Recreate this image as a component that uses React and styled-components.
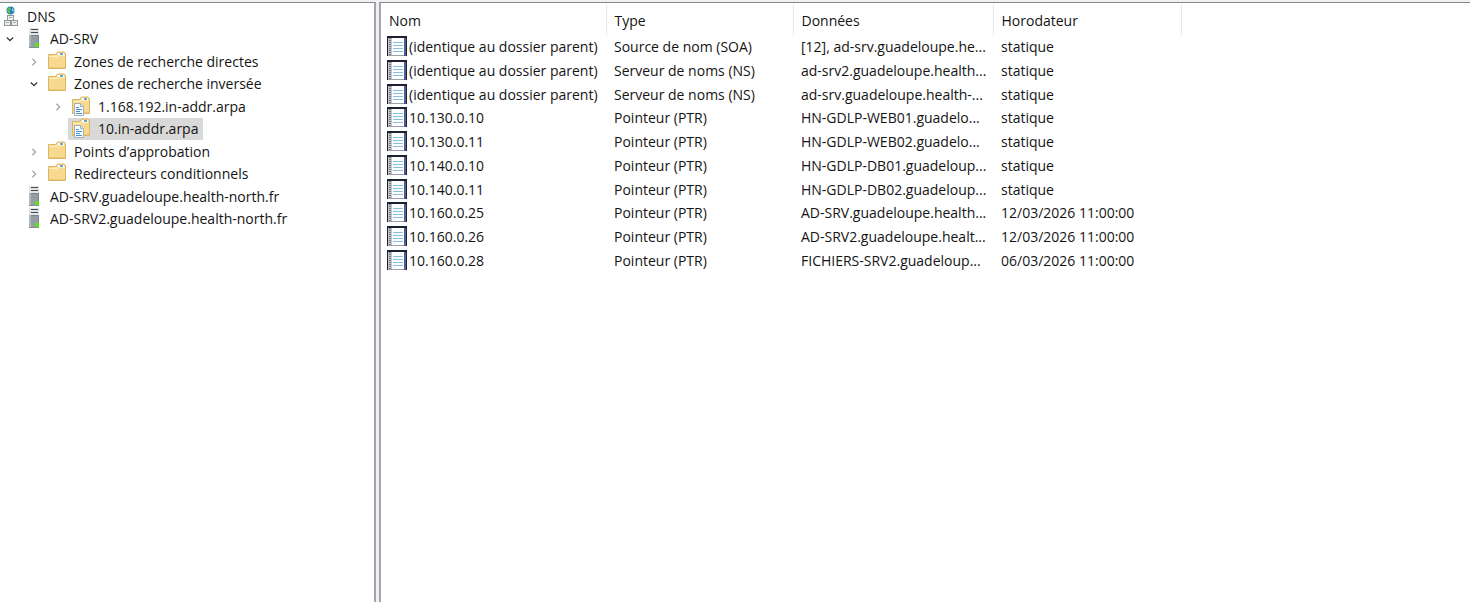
import React from "react";
import styled, { createGlobalStyle } from "styled-components";

const GlobalStyle = createGlobalStyle`
  * { box-sizing: border-box; }
  body {
    margin: 0;
    background: #f0f0f0;
    color: #141414;
    font-family: "Open Sans", "Noto Sans", sans-serif;
    font-size: 14px;
    line-height: 20px;
  }
`;

const Console = styled.main`
  display: flex;
  gap: 3px;
  min-height: 100vh;
  padding-top: 2px;
`;

const TreePane = styled.nav`
  flex: 0 0 376px;
  min-width: 0;
  background: #fff;
  border-top: 1px solid #828790;
  border-right: 2px solid #a2a4ae;
  padding-top: 2px;
`;

const ListPane = styled.section`
  flex: 1;
  min-width: 0;
  background: #fff;
  border-top: 1px solid #828790;
  border-left: 2px solid #a2a4ae;
  padding-top: 1px;
`;

const Tree = styled.ul`
  list-style: none;
  margin: 0;
  padding: 0;
`;

const TreeItem = styled.li`
  display: flex;
  align-items: center;
  height: 23px;
  padding-left: ${(p) => p.$level * 24}px;
  white-space: nowrap;

  &:nth-child(even) { height: 22px; }
`;

const Toggle = styled.button`
  display: flex;
  align-items: center;
  justify-content: center;
  width: 20px;
  height: 20px;
  padding: 0;
  border: 0;
  background: none;
`;

const ToggleSpace = styled.span`
  width: 20px;
`;

const Node = styled.span`
  display: flex;
  align-items: center;
  height: 100%;
  gap: ${(p) => (p.$root ? 3 : 6)}px;
  padding-right: 5px;
  background: ${(p) => (p.$selected ? "#d9d9d9" : "transparent")};
`;

const TreeIcon = styled.svg`
  flex: none;
  width: 24px;
  height: 22px;
`;

const Table = styled.table`
  width: 100%;
  table-layout: fixed;
  border-collapse: collapse;
`;

const Column = styled.col`
  width: ${(p) => (p.$width ? p.$width + "px" : "auto")};
`;

const Heading = styled.th`
  height: 31px;
  padding: 2px 8px 0;
  font-weight: 400;
  text-align: left;
  border-right: 1px solid #e8e8e8;

  &:last-child { border-right: 0; }
`;

const Record = styled.tr`
  height: 24px;

  &:nth-child(4n + 3) { height: 23px; }
`;

const Cell = styled.td`
  padding: 0 0 0 8px;
  white-space: nowrap;
`;

const NameCell = styled(Cell)`
  padding-left: 6px;
`;

const Name = styled.span`
  display: flex;
  align-items: center;
  gap: 2px;
`;

const RecordSvg = styled.svg`
  flex: none;
  width: 20px;
  height: 22px;
`;

const Chevron = ({ open }) => (
  <svg width="12" height="12" viewBox="0 0 12 12" fill="none" aria-hidden="true">
    {open ? (
      <path d="M2.8 4.6 6 7.6 9.2 4.6" stroke="#404040" strokeWidth="1.4" />
    ) : (
      <path d="M4.4 2.8 7.6 6 4.4 9.2" stroke="#a6a6a6" strokeWidth="1.3" />
    )}
  </svg>
);

const NetworkIcon = () => (
  <TreeIcon viewBox="0 0 24 22" aria-hidden="true">
    <circle cx="10.500" cy="4.500" r="4" fill="#2b7fb8" />
    <path d="M7.500 2.700 10.100 1.100 11.100 2.900 9.500 4.700 10.500 6.500 9.100 7.700 7.100 5.500Z" fill="#5fbd5b" />
    <path d="M12 2 14 4 13 6 12 4.200Z" fill="#8bd6e6" />
    <g fill="#eceeee" stroke="#92989c">
      <rect x="7.500" y="9.500" width="6" height="5" />
      <rect x="4.500" y="14.500" width="6" height="5" />
      <rect x="11.500" y="14.500" width="6" height="5" />
    </g>
    <path d="M9 11.500h3M6 16.500h3M13 16.500h3" stroke="#aab0b4" />
  </TreeIcon>
);

const ServerIcon = () => (
  <TreeIcon viewBox="0 0 24 22" aria-hidden="true">
    <rect x="9" y="0" width="10" height="20" fill="#939da5" />
    <rect x="9" y="0" width="2" height="20" fill="#b0b8be" />
    <rect x="18" y="0" width="1" height="20" fill="#79838b" />
    <rect x="9" y="0" width="10" height="7" fill="#dfe3e6" />
    <path d="M11 1.500h7M11 4.500h7" stroke="#454c51" />
    <path d="M11 7.500h7" stroke="#7b858c" />
    <rect x="15" y="15" width="4" height="4" fill="#5fe01c" />
    <path d="M9 19.500h10" stroke="#858e95" />
  </TreeIcon>
);

const FolderShape = () => (
  <>
    <path d="M4.500 17.500V3.500h7l2-2.500h6.500l1.500 1.500v15Z" fill="#f7d98f" stroke="#dcb465" />
    <path d="M5 5.500h8l1.500-1h6" stroke="#fdf0c4" fill="none" />
    <rect x="14" y="2" width="6" height="2" fill="#fff" />
    <rect x="16" y="2" width="3" height="2" fill="#63a6c7" />
    <path d="M5 16.500h16" stroke="#efc878" />
  </>
);

const FolderIcon = () => (
  <TreeIcon viewBox="0 0 24 22" aria-hidden="true">
    <FolderShape />
  </TreeIcon>
);

const ZoneIcon = () => (
  <TreeIcon viewBox="0 0 24 22" aria-hidden="true">
    <FolderShape />
    <path d="M6.500 7.500h6l3 3v9h-9Z" fill="#f8fbfe" stroke="#9fb0be" />
    <path d="M12.500 7.500v3h3" fill="#d9e4ee" stroke="#9fb0be" />
    <path d="M8 11.500h3M8 13.500h6M8 15.500h4M8 17.500h6" stroke="#4a8fd0" />
  </TreeIcon>
);

const RecordIcon = () => (
  <RecordSvg viewBox="0 0 20 22" aria-hidden="true">
    <rect width="20" height="20" fill="#1c2030" />
    <rect x="1" y="2" width="4" height="17" fill="#c3c5c9" />
    <rect x="5" y="2" width="12" height="17" fill="#fbfdff" />
    <rect x="17" y="2" width="2" height="18" fill="#4d5e91" />
    <path d="M3 2v17" stroke="#777a82" strokeWidth="2" strokeDasharray="1 1" />
    <path d="M6 6.500h10M6 9.500h10M6 12.500h10M6 15.500h10" stroke="#8cc0e0" />
    <path d="M1 19.500h16" stroke="#9ba0ab" />
  </RecordSvg>
);

const icons = { network: NetworkIcon, server: ServerIcon, folder: FolderIcon, zone: ZoneIcon };

const nodes = [
  { label: "DNS", level: 0, icon: "network", root: true },
  { label: "AD-SRV", level: 0, icon: "server", open: true },
  { label: "Zones de recherche directes", level: 1, icon: "folder", open: false },
  { label: "Zones de recherche inversée", level: 1, icon: "folder", open: true },
  { label: "1.168.192.in-addr.arpa", level: 2, icon: "zone", open: false },
  { label: "10.in-addr.arpa", level: 2, icon: "zone", selected: true },
  { label: "Points d’approbation", level: 1, icon: "folder", open: false },
  { label: "Redirecteurs conditionnels", level: 1, icon: "folder", open: false },
  { label: "AD-SRV.guadeloupe.health-north.fr", level: 0, icon: "server" },
  { label: "AD-SRV2.guadeloupe.health-north.fr", level: 0, icon: "server" },
];

const columns = [
  { title: "Nom", width: 225 },
  { title: "Type", width: 187 },
  { title: "Données", width: 200 },
  { title: "Horodateur", width: 188 },
];

const records = [
  ["(identique au dossier parent)", "Source de nom (SOA)", "[12], ad-srv.guadeloupe.he...", "statique"],
  ["(identique au dossier parent)", "Serveur de noms (NS)", "ad-srv2.guadeloupe.health...", "statique"],
  ["(identique au dossier parent)", "Serveur de noms (NS)", "ad-srv.guadeloupe.health-...", "statique"],
  ["10.130.0.10", "Pointeur (PTR)", "HN-GDLP-WEB01.guadelo...", "statique"],
  ["10.130.0.11", "Pointeur (PTR)", "HN-GDLP-WEB02.guadelo...", "statique"],
  ["10.140.0.10", "Pointeur (PTR)", "HN-GDLP-DB01.guadeloup...", "statique"],
  ["10.140.0.11", "Pointeur (PTR)", "HN-GDLP-DB02.guadeloup...", "statique"],
  ["10.160.0.25", "Pointeur (PTR)", "AD-SRV.guadeloupe.health...", "12/03/2026 11:00:00"],
  ["10.160.0.26", "Pointeur (PTR)", "AD-SRV2.guadeloupe.healt...", "12/03/2026 11:00:00"],
  ["10.160.0.28", "Pointeur (PTR)", "FICHIERS-SRV2.guadeloup...", "06/03/2026 11:00:00"],
];

export default function App() {
  return (
    <>
      <GlobalStyle />
      <Console>
        <TreePane>
          <Tree>
            {nodes.map((n) => {
              const Icon = icons[n.icon];
              return (
                <TreeItem key={n.label} $level={n.level}>
                  {n.open === undefined && !n.root && <ToggleSpace />}
                  {n.open !== undefined && (
                    <Toggle type="button" aria-expanded={n.open} aria-label={n.label}>
                      <Chevron open={n.open} />
                    </Toggle>
                  )}
                  <Node $root={n.root} $selected={n.selected}>
                    <Icon />
                    {n.label}
                  </Node>
                </TreeItem>
              );
            })}
          </Tree>
        </TreePane>
        <ListPane>
          <Table>
            <colgroup>
              {columns.map((c) => (
                <Column key={c.title} $width={c.width} />
              ))}
              <Column />
            </colgroup>
            <thead>
              <tr>
                {columns.map((c) => (
                  <Heading key={c.title} scope="col">{c.title}</Heading>
                ))}
                <Heading as="td" />
              </tr>
            </thead>
            <tbody>
              {records.map(([name, type, data, stamp], i) => (
                <Record key={i}>
                  <NameCell>
                    <Name>
                      <RecordIcon />
                      {name}
                    </Name>
                  </NameCell>
                  <Cell>{type}</Cell>
                  <Cell>{data}</Cell>
                  <Cell>{stamp}</Cell>
                  <Cell />
                </Record>
              ))}
            </tbody>
          </Table>
        </ListPane>
      </Console>
    </>
  );
}
